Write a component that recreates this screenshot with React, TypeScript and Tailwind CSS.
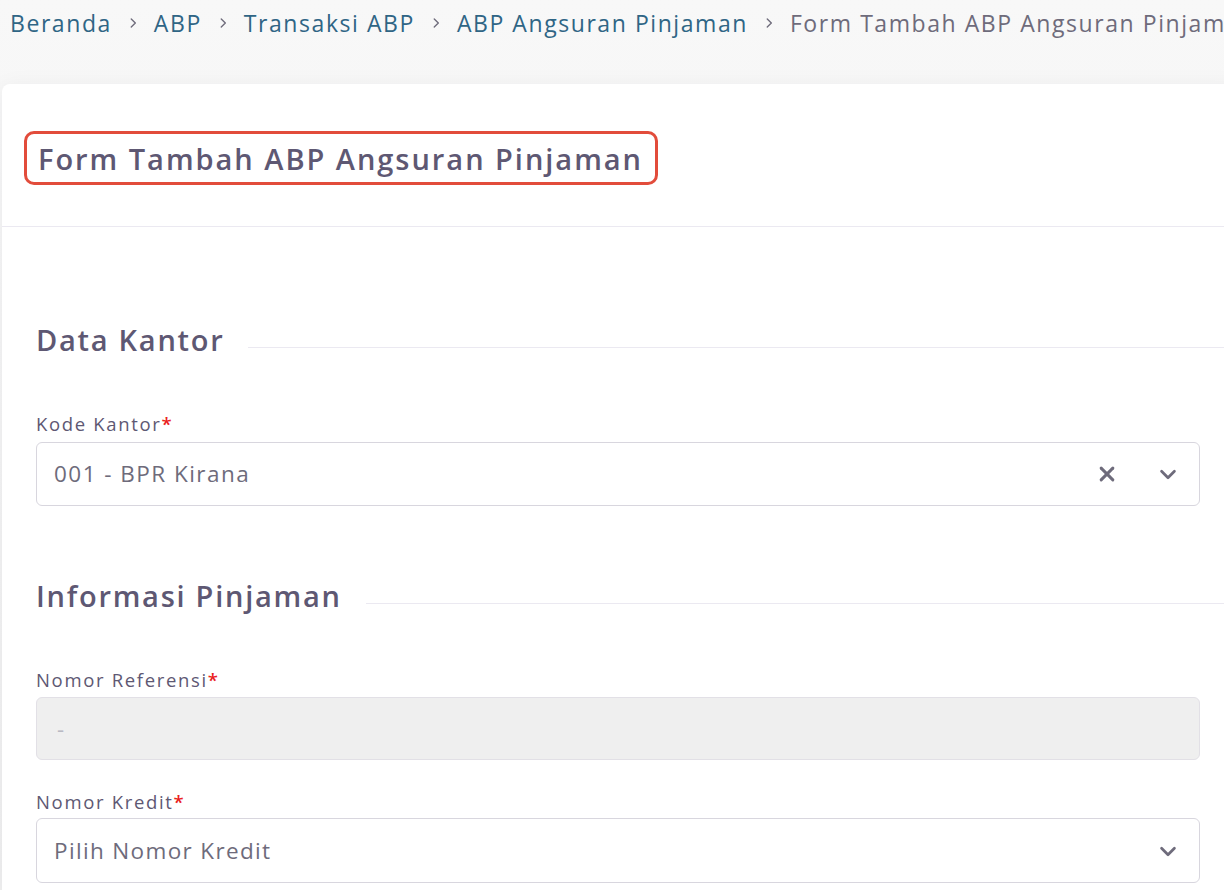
import React from "react";

const font = { fontFamily: '"Open Sans", "Noto Sans", sans-serif' };

function Chevron() {
  return (
    <svg width="22" height="22" viewBox="0 0 24 24" fill="none" stroke="#6e6b7b" strokeWidth="3" strokeLinecap="round" strokeLinejoin="round" className="shrink-0">
      <polyline points="5 9 12 16 19 9" />
    </svg>
  );
}

function XIcon() {
  return (
    <svg width="20" height="20" viewBox="0 0 24 24" fill="none" stroke="#6e6b7b" strokeWidth="3.6" strokeLinecap="round" className="shrink-0">
      <line x1="5" y1="5" x2="19" y2="19" />
      <line x1="19" y1="5" x2="5" y2="19" />
    </svg>
  );
}

function Crumb({ children }: { children: React.ReactNode }) {
  return <span className="shrink-0 text-[#2f6585]">{children}</span>;
}

function Sep() {
  return (
    <svg width="14" height="14" viewBox="0 0 24 24" fill="none" stroke="#6e6b7b" strokeWidth="2.3" strokeLinecap="round" strokeLinejoin="round" className="shrink-0 mx-[14px]">
      <polyline points="9 5 16 12 9 19" />
    </svg>
  );
}

function Section({ title }: { title: string }) {
  return (
    <div className="flex items-center h-[36px] -mr-6">
      <span className="text-[29px] font-semibold tracking-[0.06em] text-[#5e5873] whitespace-nowrap leading-[36px]">{title}</span>
      <div className="flex-1 h-px bg-[#ebe9f1] ml-6 mt-[14px]" />
    </div>
  );
}

function Label({ text }: { text: string }) {
  return (
    <div className="text-[18.5px] tracking-[0.09em] leading-[24px] text-[#5e5873]">
      {text}
      <span className="text-[#ea2020] font-semibold">*</span>
    </div>
  );
}

export default function App() {
  return (
    <div className="min-h-[890px] w-[1224px] overflow-hidden bg-gradient-to-b from-[#f8f8f8] to-[#f0f0f0]" style={font}>
      <nav className="h-[46px] pl-[10px] flex items-center overflow-hidden text-[23px] tracking-[0.068em] whitespace-nowrap">
        <Crumb>Beranda</Crumb>
        <Sep />
        <Crumb>ABP</Crumb>
        <Sep />
        <Crumb>Transaksi ABP</Crumb>
        <Sep />
        <Crumb>ABP Angsuran Pinjaman</Crumb>
        <Sep />
        <span className="shrink-0 text-[#6e6b7b]">Form Tambah ABP Angsuran Pinjaman</span>
      </nav>
      <div className="mt-[38px] ml-[2px] w-[1240px] bg-white rounded-tl-[8px] shadow-[0_4px_24px_rgba(34,41,47,0.06)] min-h-[806px]">
        <div className="h-[143px] border-b border-[#ebe9f1] pl-[22px] pt-[47px]">
          <div className="inline-flex items-center h-[54px] pl-[11px] pr-[12px] border-[3px] border-[#e24c3b] rounded-[10px]">
            <span className="text-[29px] font-[550] tracking-[0.068em] text-[#5e5873] leading-none">Form Tambah ABP Angsuran Pinjaman</span>
          </div>
        </div>
        <div className="pl-[34px] pr-[24px] w-[1222px] pt-[95px]">
          <Section title="Data Kantor" />
          <div className="mt-[54px]">
            <Label text="Kode Kantor" />
            <div className="mt-[6px] h-[64px] border border-[#d8d6de] rounded-[6px] flex items-center pl-[17px] pr-[20px]">
              <span className="flex-1 text-[22.5px] tracking-[0.065em] text-[#6e6b7b]">001 - BPR Kirana</span>
              <XIcon />
              <div className="w-[40px]" />
              <Chevron />
            </div>
          </div>
          <div className="mt-[72px]">
            <Section title="Informasi Pinjaman" />
          </div>
          <div className="mt-[54px]">
            <Label text="Nomor Referensi" />
            <div className="mt-[5px] h-[63px] border border-[#e2e0e6] bg-[#efefef] rounded-[6px] flex items-center pl-[20px]">
              <span className="text-[22px] text-[#b9b9c3]">-</span>
            </div>
          </div>
          <div className="mt-[30px]">
            <Label text="Nomor Kredit" />
            <div className="mt-[4px] h-[65px] border border-[#d8d6de] rounded-[6px] flex items-center pl-[17px] pr-[20px]">
              <span className="flex-1 text-[22.5px] tracking-[0.06em] text-[#6e6b7b]">Pilih Nomor Kredit</span>
              <Chevron />
            </div>
          </div>
        </div>
      </div>
    </div>
  );
}
